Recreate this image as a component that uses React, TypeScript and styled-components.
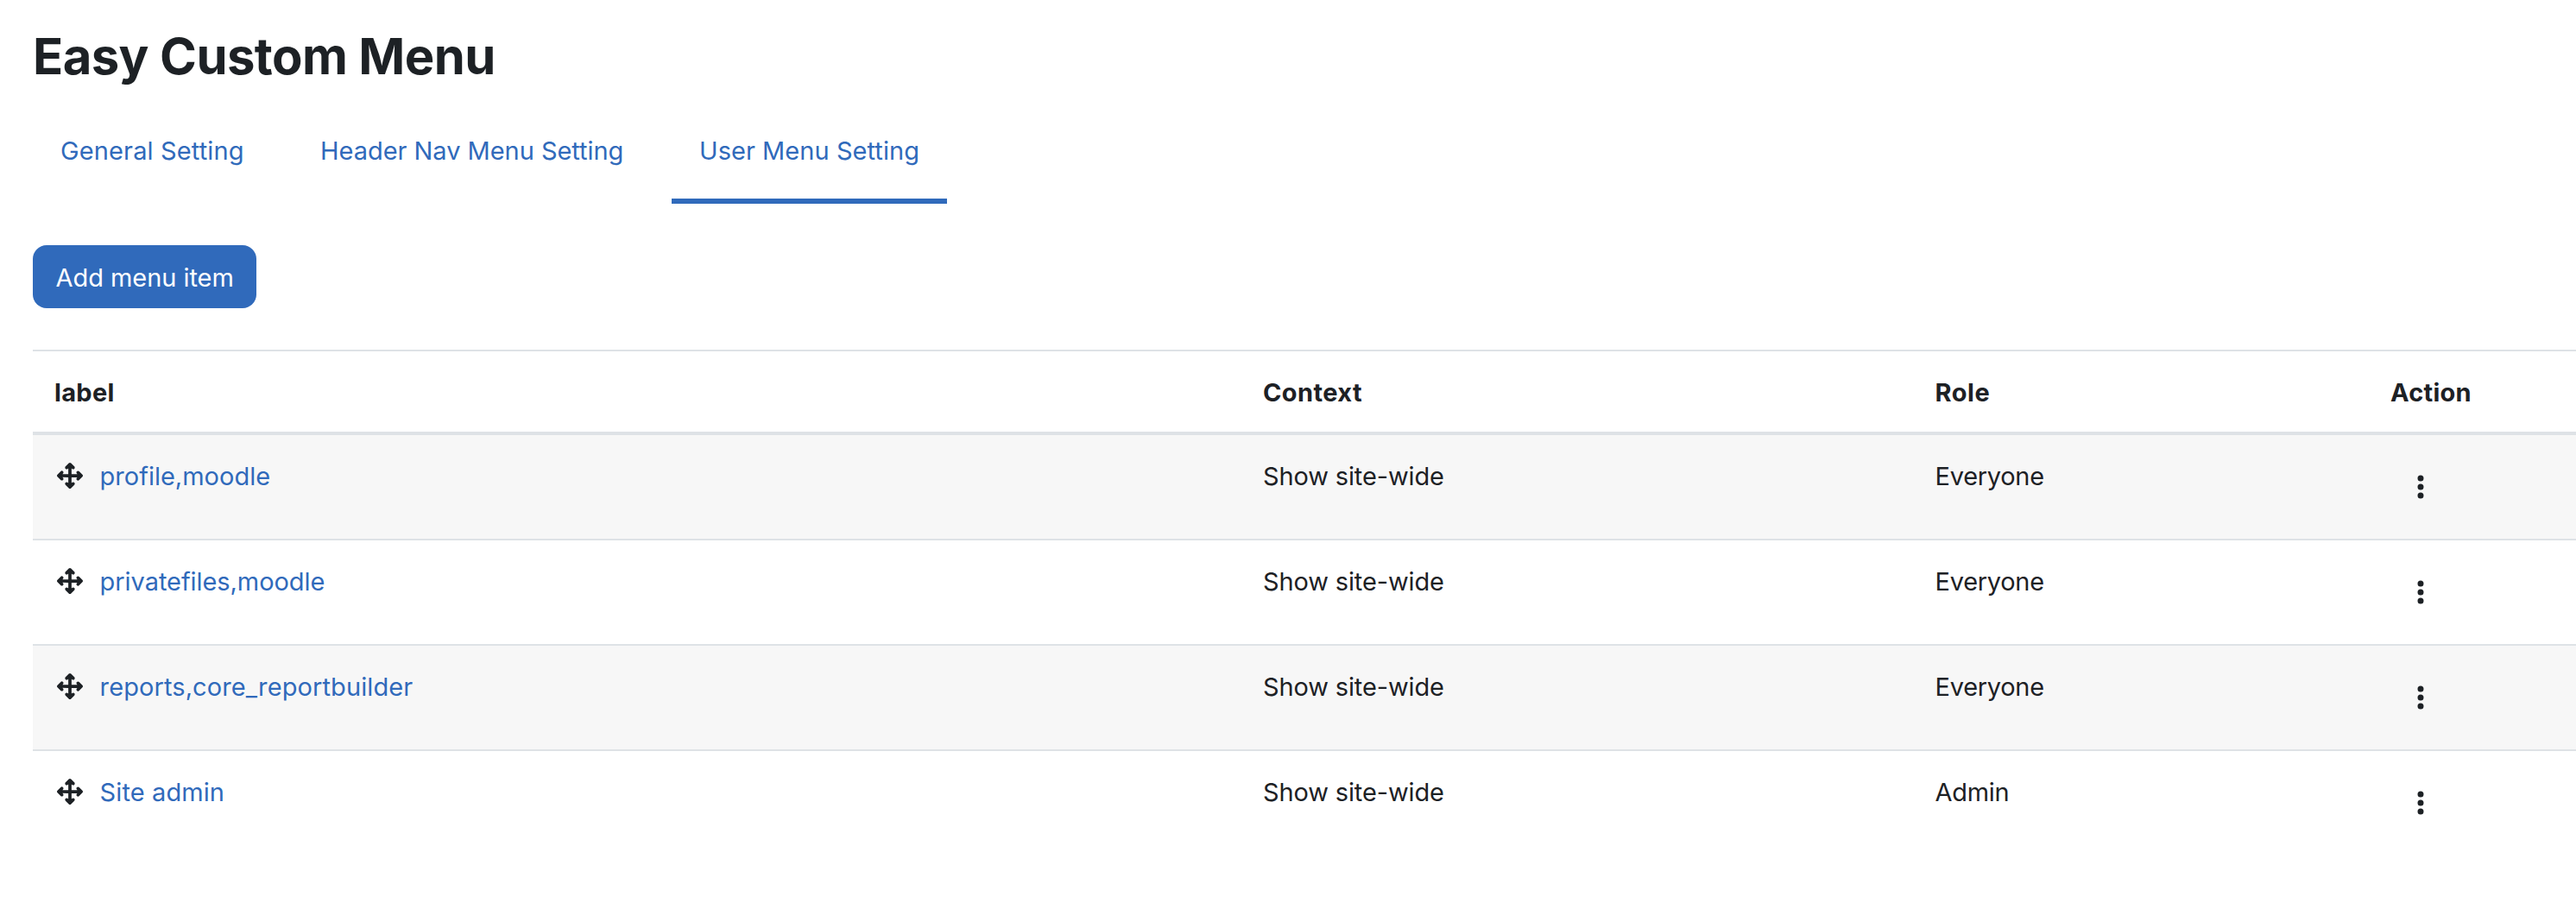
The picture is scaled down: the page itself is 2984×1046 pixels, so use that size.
import React from "react";
import styled, { createGlobalStyle } from "styled-components";
import { FaArrowsUpDownLeftRight, FaEllipsisVertical } from "react-icons/fa6";

const GlobalStyle = createGlobalStyle`
  *, *::before, *::after { box-sizing: border-box; }
  body {
    margin: 0;
    background: #fff;
    color: #1d2125;
    font-family: Inter, "Liberation Sans", sans-serif;
    font-size: 29px;
    line-height: 45px;
  }
`;

const Page = styled.main`
  min-height: 1046px;
  padding: 29px 0 0 38px;
  overflow: hidden;
`;

const Title = styled.h1`
  margin: 0 0 19px;
  font-size: 58px;
  line-height: 72px;
  font-weight: 700;
  letter-spacing: -0.59px;
`;

const Tabs = styled.nav`
  display: flex;
  gap: 23px;
`;

const Tab = styled.a<{ $active?: boolean; $width: number; $tracking: number }>`
  width: ${(p) => p.$width}px;
  padding: 32px 0 33px 32px;
  border-bottom: 6px solid ${(p) => (p.$active ? "#306abb" : "transparent")};
  color: #306abb;
  letter-spacing: ${(p) => p.$tracking}px;
  text-decoration: none;
  white-space: nowrap;
`;

const AddButton = styled.button`
  display: block;
  width: 259px;
  height: 73px;
  margin: 48px 0;
  padding: 15px 0 13px 26.5px;
  border: 0;
  border-radius: 16px;
  background: #306abb;
  color: #fff;
  font: inherit;
  letter-spacing: -0.05px;
  text-align: left;
`;

const Table = styled.div`
  border-top: 2px solid #dee2e6;
`;

const Row = styled.div<{ $striped?: boolean }>`
  display: grid;
  grid-template-columns: 1401px 778px 528px 1fr;
  height: 122px;
  background: ${(p) => (p.$striped ? "#f7f7f7" : "transparent")};
  border-bottom: 2px solid #dee2e6;

  &:last-child { border-bottom: 0; }
`;

const HeadRow = styled(Row)`
  height: 97px;
  border-bottom-width: 4px;
  font-weight: 700;
`;

const Cell = styled.div<{ $tracking?: number; $inset?: number }>`
  padding: 25px 0 0 ${(p) => p.$inset ?? 24}px;
  letter-spacing: ${(p) => p.$tracking ?? 0}px;
  white-space: nowrap;
`;

const LabelCell = styled(Cell)`
  display: flex;
  align-items: flex-start;
  gap: 19.6px;
  padding-left: 28px;
`;

const MoveIcon = styled(FaArrowsUpDownLeftRight)`
  width: 30px;
  height: 30px;
  margin-top: 7px;
`;

const ItemLink = styled.a`
  color: #306abb;
  text-decoration: none;
`;

const ActionCell = styled.div`
  padding: 44px 0 0 55px;
`;

const KebabIcon = styled(FaEllipsisVertical)`
  display: block;
  width: 8px;
  height: 32px;
`;

const tabs = [
  { text: "General Setting", width: 278, tracking: 0.128 },
  { text: "Header Nav Menu Setting", width: 416, tracking: -0.037 },
  { text: "User Menu Setting", width: 319, tracking: 0.05, active: true },
];

const headings = [
  { text: "label", tracking: 0.3, inset: 25 },
  { text: "Context", tracking: 0.4, inset: 24 },
  { text: "Role", tracking: 0.5, inset: 24.6 },
  { text: "Action", tracking: 0.24, inset: 24 },
];

const items = [
  { label: "profile,moodle", tracking: 0, role: "Everyone" },
  { label: "privatefiles,moodle", tracking: -0.06, role: "Everyone" },
  { label: "reports,core_reportbuilder", tracking: 0.1, role: "Everyone" },
  { label: "Site admin", tracking: 0.1, role: "Admin" },
];

export default function App() {
  return (
    <>
      <GlobalStyle />
      <Page>
        <Title>Easy Custom Menu</Title>
        <Tabs>
          {tabs.map((t) => (
            <Tab key={t.text} $width={t.width} $tracking={t.tracking} $active={t.active}>
              {t.text}
            </Tab>
          ))}
        </Tabs>
        <AddButton>Add menu item</AddButton>
        <Table role="table">
          <HeadRow role="row">
            {headings.map((h) => (
              <Cell key={h.text} role="columnheader" $tracking={h.tracking} $inset={h.inset}>
                {h.text}
              </Cell>
            ))}
          </HeadRow>
          {items.map((item, i) => (
            <Row key={item.label} role="row" $striped={i % 2 === 0}>
              <LabelCell role="cell" $tracking={item.tracking}>
                <MoveIcon />
                <ItemLink>{item.label}</ItemLink>
              </LabelCell>
              <Cell role="cell" $tracking={-0.139}>Show site-wide</Cell>
              <Cell role="cell" $tracking={-0.3} $inset={24.6}>{item.role}</Cell>
              <ActionCell role="cell">
                <KebabIcon />
              </ActionCell>
            </Row>
          ))}
        </Table>
      </Page>
    </>
  );
}
